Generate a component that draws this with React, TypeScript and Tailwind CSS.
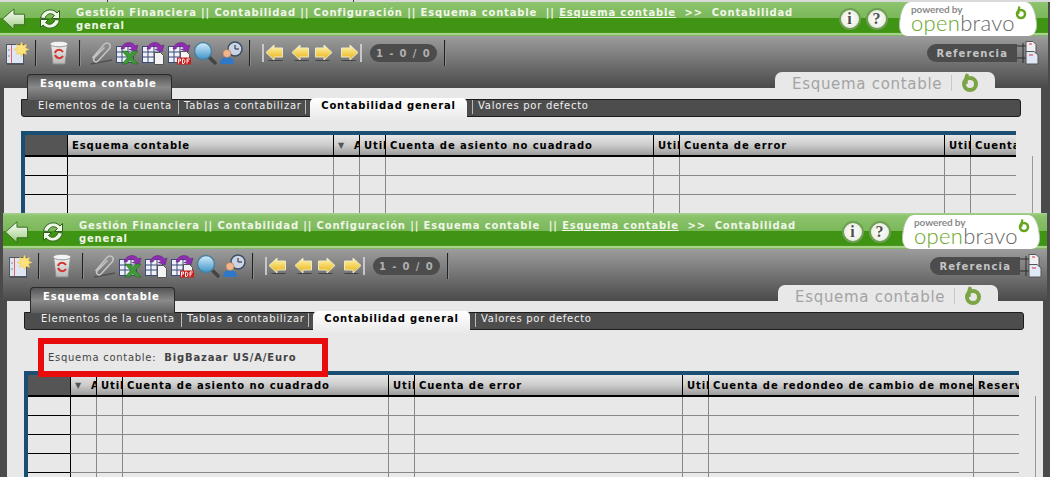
import React from "react";

const Sep = () => <div className="w-px h-[26px] bg-[#222] border-r border-[#8a8a8a] box-content" />;

const Back = () => (
  <svg width="25" height="24" viewBox="0 0 26 24">
    <defs>
      <linearGradient id="bk" x1="0" y1="0" x2="0" y2="1">
        <stop offset="0" stopColor="#ffffff" />
        <stop offset="1" stopColor="#9ccb7c" />
      </linearGradient>
    </defs>
    <path d="M1.500 12 L13.500 1.500 V7 H24.500 V18 H13.500 V23 Z" fill="url(#bk)" stroke="#3c6a2a" strokeWidth="1" />
  </svg>
);

const Refresh = () => (
  <svg width="22" height="24" viewBox="0 0 22 24" fill="none">
    <path d="M1.500 11 C3 3 13 0 18 6 L20.500 3.500 V11.500 H12.500 L15.500 8.500 C12 5 7 7 6 11.500 Z" fill="#eef8e4" stroke="#2f6020" strokeWidth="1" />
    <path d="M20.500 13 C19 21 9 24 4 18 L1.500 20.500 V12.500 H9.500 L6.500 15.500 C10 19 15 17 16 12.500 Z" fill="#eef8e4" stroke="#2f6020" strokeWidth="1" />
  </svg>
);

const RoundBtn = ({ t }: { t: string }) => (
  <div className="w-[22px] h-[22px] rounded-full bg-[radial-gradient(#ffffff,#e3e8d6)] border-2 border-[#6f9e56] flex items-center justify-center text-[16px] font-bold text-[#4f4f4f] font-['Liberation_Serif',serif] leading-none">
    {t}
  </div>
);

const Logo = () => (
  <div className="relative w-[138px] h-[34px] mt-[2px] bg-white rounded-[14px_14px_10px_10px/30px_30px_12px_12px] border-x border-[#b9c4ae] overflow-hidden font-['Lato',sans-serif]">
    <div className="absolute left-[11px] top-[1px] text-[10px] leading-[12px] text-[#8a8a8a] tracking-[-0.1px]">powered by</div>
    <div className="absolute left-[11px] top-[8px] text-[22px] leading-[26px] font-light tracking-[0.3px] whitespace-nowrap">
      <span className="text-[#66a61e]">open</span>
      <span className="text-[#666]">bravo</span>
    </div>
    <svg className="absolute left-[114px] top-[3px]" width="14" height="15" viewBox="0 0 14 15" fill="none">
      <circle cx="7" cy="9" r="4" stroke="#66a61e" strokeWidth="2.600" />
      <path d="M5.500 1.500 C4.500 4 4 7 4.500 9" stroke="#66a61e" strokeWidth="2.200" />
    </svg>
  </div>
);

const Header = () => (
  <div className="h-[36px] flex bg-[linear-gradient(#a9d190_0%,#8cc36d_8%,#7bb85a_49%,#3f9413_50%,#3f9413_90%,#a7d28c_93%,#a7d28c_96%,#6aa84c_100%)] text-[#f0f6e8] text-[10px] font-bold tracking-[0.84px] leading-[13px]">
    <div className="w-[76px] pl-[1px] pt-[7px] flex gap-[13px] shrink-0">
      <Back />
      <Refresh />
    </div>
    <div className="w-[754px] shrink-0 pt-[6px]">
      Gestión Financiera || Contabilidad || Configuración || Esquema contable &nbsp;|| <span className="underline">Esquema contable</span> &nbsp;&gt;&gt; &nbsp;Contabilidad general
    </div>
    <div className="flex gap-[5px] ml-[9px] pt-[8px]">
      <RoundBtn t="i" />
      <RoundBtn t="?" />
    </div>
    <div className="ml-[11px]">
      <Logo />
    </div>
  </div>
);

const Grad = ({ id, a, b }: { id: string; a: string; b: string }) => (
  <linearGradient id={id} x1="0" y1="0" x2="0" y2="1">
    <stop offset="0" stopColor={a} />
    <stop offset="1" stopColor={b} />
  </linearGradient>
);

const Cells = () => (
  <g stroke="#3b4a78" strokeWidth="1">
    <rect x="1.500" y="5.500" width="17" height="16" fill="#eef1f8" />
    <path d="M1.500 11H18.500M1.500 16H18.500M7 5.500V21.500M13 5.500V21.500" />
  </g>
);
const Swoosh = () => <path d="M6 8 C8 0 18 0 20 5 L23 4 L21 11 L14 8.500 L17 7.500 C15 4.500 10 4.500 9 8 Z" fill="#8d2fb0" stroke="#5c1c78" strokeWidth=".5" />;

const New = () => (
  <svg width="24" height="24" viewBox="0 0 24 24">
    <path d="M2 23 H19 V24 H2 Z" fill="#333" opacity=".5" />
    <rect x="1.500" y="3.500" width="17" height="19" fill="#dfe6f2" stroke="#4d5866" />
    <path d="M6.500 4V22" stroke="#d66" />
    <path d="M3.500 9h1M3.500 15h1" stroke="#333" />
    <path d="M16.500 1l1.400 3.600L21.500 3.500l-1 3.500 3.500 1.400-3.500 1.400 1 3.500-3.600-1.100-1.400 3.600-1.400-3.600-3.600 1.100 1-3.500-3.500-1.400 3.500-1.400-1-3.500 3.600 1.100Z" fill="#fbe27a" stroke="#f3c74a" strokeWidth=".5" />
  </svg>
);
const Trash = () => (
  <svg width="22" height="26" viewBox="0 0 22 26">
    <defs><Grad id="tr" a="#f2f2f2" b="#b8b8b8" /></defs>
    <path d="M2.500 4 L5 24 H17 L19.500 4 Z" fill="url(#tr)" stroke="#8a8a8a" />
    <ellipse cx="11" cy="4" rx="9" ry="2.800" fill="#f4f4f4" stroke="#999" />
    <path d="M7 13 C8 9 13 9 15 12 M15 16 C13 19 9 19 7 15" stroke="#d0342c" strokeWidth="2" fill="none" />
  </svg>
);
const Clip = () => (
  <svg width="24" height="24" viewBox="0 0 24 24" fill="none">
    <path d="M2 23 L23 19" stroke="#3a3a3a" strokeWidth="1.500" opacity=".6" />
    <path d="M3.500 17 L15 3.500 C18 .5 23 3 20.500 7.500 L9 20 C6.500 22.500 3 19.500 5.500 16.500 L15.500 6.500" stroke="#c4c4c4" strokeWidth="1.500" />
  </svg>
);
const Excel = () => (
  <svg width="24" height="24" viewBox="0 0 24 24">
    <Cells />
    <Swoosh />
    <path d="M7 10h5l3 3 3-3h5l-5.500 6.500 5.500 6.500h-5l-3-3.500-3 3.500H7l5.500-6.500Z" fill="#3f9a35" stroke="#1f5e1a" strokeWidth=".5" />
  </svg>
);
const Sheet = () => (
  <svg width="24" height="24" viewBox="0 0 24 24">
    <Cells />
    <Swoosh />
    <path d="M13.500 11.500h6l3 3v9h-9Z" fill="#f3f3f3" stroke="#555" />
  </svg>
);
const Pdf = () => (
  <svg width="24" height="24" viewBox="0 0 24 24">
    <Cells />
    <Swoosh />
    <path d="M13.500 10.500h6l3 3v4h-9Z" fill="#f3f3f3" stroke="#555" />
    <rect x="10" y="16.500" width="14" height="7" fill="#c81e1e" />
    <path d="M11.500 22.500v-4.500h2v2h-2M15.500 18v4.500h1.300l1-1.500v-1.500l-1-1.500ZM20 22.500v-4.500h3M20 20h2" stroke="#fff" strokeWidth=".9" fill="none" />
  </svg>
);
const Search = () => (
  <svg width="24" height="24" viewBox="0 0 24 24">
    <defs>
      <Grad id="gl" a="#d6eefa" b="#3d93c9" />
    </defs>
    <path d="M15 15 L22 22" stroke="#444" strokeWidth="3.500" strokeLinecap="round" />
    <circle cx="10" cy="10" r="8.500" fill="url(#gl)" stroke="#4a7f9f" strokeWidth="1.500" />
  </svg>
);
const Audit = () => (
  <svg width="24" height="24" viewBox="0 0 24 24">
    <circle cx="16" cy="8" r="7" fill="#c9d5e4" stroke="#3f4f66" strokeWidth="1.500" />
    <path d="M16 4V8H20" stroke="#223" fill="none" />
    <path d="M1 23 C1 18 4 16 8 16 C12 16 15 18 15 23 Z" fill="#2f78c8" />
    <circle cx="8" cy="12.500" r="4" fill="#f1b58e" stroke="#9a6a4a" strokeWidth=".5" />
  </svg>
);
const Arrow = ({ dir, bar }: { dir: "l" | "r"; bar?: boolean }) => (
  <svg width="22" height="22" viewBox="0 0 22 22">
    <defs>
      <Grad id="ya" a="#fff8b0" b="#e8b010" />
    </defs>
    <g transform={dir === "r" ? "translate(22 0) scale(-1 1)" : undefined}>
      <path d="M5 19 H20 L21 18 H8 Z" fill="#222" opacity=".6" />
      <path d="M4 10.500 L12 3 V6 H20.500 V15 H12 V18 Z" fill="url(#ya)" stroke="#ece8c8" strokeWidth="1" />
      {bar && <path d="M1 2V20" stroke="#d0d0d0" strokeWidth="1.800" />}
    </g>
  </svg>
);
const Copy = () => (
  <svg width="23" height="24" viewBox="0 0 23 24" className="shrink-0">
    <path d="M0 5H9M0 17H9M6 2V22" stroke="#2a2a2a" fill="none" />
    <path d="M9 .5h7l3 3v9H9Z" fill="#f0f0f4" stroke="#555" />
    <path d="M9 10.500h8l4 3.500v9H9Z" fill="#dfe8f6" stroke="#555" />
    <path d="M12 3h3M12 14h4" stroke="#d33" />
  </svg>
);

const Toolbar = () => (
  <div className="h-[52px] relative bg-[linear-gradient(#9c9c9c,#4a4a4a)]">
    <div className="w-[1044px] h-[34px] flex items-center pl-[5px]">
      <New />
      <div className="ml-[6px] mr-[11px]"><Sep /></div>
      <Trash />
      <div className="ml-[9px] mr-[8px]"><Sep /></div>
      <div className="flex gap-[2px]">
        <Clip /><Excel /><Sheet /><Pdf /><Search /><Audit />
      </div>
      <div className="ml-[6px] mr-[11px]"><Sep /></div>
      <div className="flex gap-[4px]">
        <Arrow dir="l" bar /><Arrow dir="l" /><Arrow dir="r" /><Arrow dir="r" bar />
      </div>
      <div className="ml-[8px] w-[67px] h-[18px] rounded-full bg-[#4c4c4c] text-[#b0b0b0] text-[10px] font-bold tracking-[1.4px] flex items-center justify-center">1 - 0 / 0</div>
      <div className="ml-[7px]"><Sep /></div>
      <div className="ml-auto flex items-center mr-[4px]">
        <div className="w-[90px] h-[18px] rounded-l-full bg-[#4c4c4c] text-[#c4c4c4] text-[10px] font-bold tracking-[1.1px] flex items-center justify-end pr-[9px]">Referencia</div>
        <Copy />
      </div>
    </div>
    <div className="absolute left-[27px] top-[38px] w-[145px] h-[26px] z-10 rounded-t-[4px] border-t border-x border-[#2a2a2a] bg-[linear-gradient(#555,#8a8a8a_50%,#5f5f5f)] text-white text-[10px] font-bold tracking-[0.84px] pl-[12px] pt-[2px] leading-[13px]">Esquema contable</div>
    <div className="absolute z-10 left-[775px] top-[36px] w-[220px] h-[16px] rounded-t-[7px] bg-[#e8e8e8] flex items-start pl-[17px] pt-[5px] text-[#a3a3a3] text-[15px] tracking-[0.7px] leading-[15px]">
      <span>Esquema contable</span>
      <span className="w-px h-[16px] -mt-[2px] bg-[#c8c8c8] ml-[9px] mr-[8px] shrink-0" />
      <svg className="-mt-[6px] shrink-0" width="20" height="24" viewBox="0 0 20 24" fill="none">
        <circle cx="10" cy="13" r="6" stroke="#7ba445" strokeWidth="4" />
        <path d="M7.500 3 C6 6 5.500 10 6 13" stroke="#7ba445" strokeWidth="3.500" />
      </svg>
    </div>
  </div>
);

const BarSep = () => <span className="w-px h-[14px] bg-[#bbb] shrink-0" />;

const SubTabs = () => (
  <div className="relative h-[18px] ml-[17px] w-[1000px] rounded-b-[3px] rounded-tr-[3px] bg-[#4d4d4d] border border-[#1c1c1c] flex items-start text-[10px] text-[#f0f0f0] tracking-[0.72px] leading-[12px]">
    <span className="relative z-20 pl-[16px] w-[156px] shrink-0 whitespace-nowrap overflow-hidden">Elementos de la cuenta</span>
    <BarSep />
    <span className="pl-[5px] w-[126px] shrink-0 whitespace-nowrap tracking-[0.76px]">Tablas a contabilizar</span>
    <BarSep />
    <div className="relative w-[157px] ml-[4px] mr-[5px] shrink-0 h-[23px] -mt-[2px] rounded-t-[5px] bg-[linear-gradient(#ffffff,#e8e8e8)] text-black font-bold tracking-[0.84px] text-center pt-[2px]">Contabilidad general</div>
    <BarSep />
    <span className="ml-[5px] whitespace-nowrap">Valores por defecto</span>
  </div>
);

type Col = { w: number; label?: string; arrow?: boolean };

const Grid = ({ cols, rows }: { cols: Col[]; rows: number }) => (
  <div className="flex">
    <div className="w-[995px] overflow-hidden border-t-4 border-l-4 border-[#1b4f72] shrink-0">
      <div className="flex h-[22px] border-b-2 border-black text-[10px] font-bold tracking-[0.92px] text-black bg-[linear-gradient(#e6e6e6,#ccc_50%,#9c9c9c)] leading-[20px] w-max">
        <div className="w-[42px] bg-[#555] shrink-0" />
        {cols.map((c, i) => (
          <div key={i} className="shrink-0 border-l border-black pl-[4px] pt-px overflow-hidden whitespace-nowrap flex items-center" style={{ width: c.w }}>
            {c.arrow && <span className="text-[#555] text-[8px] mr-[9px] shrink-0">▼</span>}
            <span className="shrink-0">{c.label}</span>
          </div>
        ))}
      </div>
      {Array.from({ length: rows }).map((_, r) => (
        <div key={r} className="flex h-[19px] w-max">
          <div className="w-[42px] shrink-0 border-b border-black" />
          {cols.map((c, i) => (
            <div key={i} className={`shrink-0 border-b border-l border-[#888] ${i === 0 ? "border-l-black" : ""}`} style={{ width: c.w }} />
          ))}
        </div>
      ))}
    </div>
    <div className="w-px h-[200px] ml-[16px] mt-[25px] bg-[#999] shrink-0" />
  </div>
);

const Window = ({ children, size }: { children: React.ReactNode; size: string }) => (
  <div className={`${size} relative`}>
    <Header />
    <Toolbar />
    <div className="relative bg-[#e8e8e8] border-l-4 border-[#4a4a4a] box-border h-[400px] pt-[11px]">{children}</div>
  </div>
);

const colsA: Col[] = [
  { w: 266, label: "Esquema contable" },
  { w: 26, arrow: true, label: "A" },
  { w: 26, label: "Util" },
  { w: 268, label: "Cuenta de asiento no cuadrado" },
  { w: 26, label: "Util" },
  { w: 265, label: "Cuenta de error" },
  { w: 26, label: "Util" },
  { w: 200, label: "Cuenta de redondeo" },
];
const colsB: Col[] = [
  { w: 26, arrow: true, label: "A" },
  { w: 26, label: "Util" },
  { w: 266, label: "Cuenta de asiento no cuadrado" },
  { w: 26, label: "Util" },
  { w: 268, label: "Cuenta de error" },
  { w: 26, label: "Util" },
  { w: 265, label: "Cuenta de redondeo de cambio de moneda" },
  { w: 120, label: "Reservado" },
];

export default function App() {
  return (
    <div className="w-[1050px] h-[477px] overflow-hidden bg-[#4a4a4a] font-['DejaVu_Sans',sans-serif]">
      <div className="h-[213px] overflow-hidden relative">
        <Window size="w-[1048px] [&>div:last-child]:border-r-[7px]">
          <SubTabs />
          <div className="ml-[17px] mt-[14px]">
            <Grid cols={colsA} rows={4} />
          </div>
        </Window>
        <div className="absolute left-0 top-0 w-full h-[2px] bg-[#d9d9d9]" />
        <div className="absolute left-[107px] top-0 w-px h-[2px] bg-[#444]" />
        <div className="absolute left-[353px] top-0 w-px h-[2px] bg-[#444]" />
      </div>
      <div className="h-[264px] overflow-hidden relative pl-[3px]">
        <Window size="w-[1044px] [&>div:last-child]:border-r-[4px]">
          <SubTabs />
          <div className="relative ml-[17px] mt-[41px]">
            <Grid cols={colsB} rows={5} />
            <div className="absolute left-[14px] top-[-33px] w-[290px] h-[39px] border-[6px] border-[#e80c0c] text-[10px] tracking-[0.72px] text-[#444] pl-[4px] flex items-center whitespace-nowrap">
              Esquema contable:<span className="w-[8px]" /><b className="tracking-[0.82px]">BigBazaar US/A/Euro</b>
            </div>
          </div>
        </Window>
      </div>
    </div>
  );
}
